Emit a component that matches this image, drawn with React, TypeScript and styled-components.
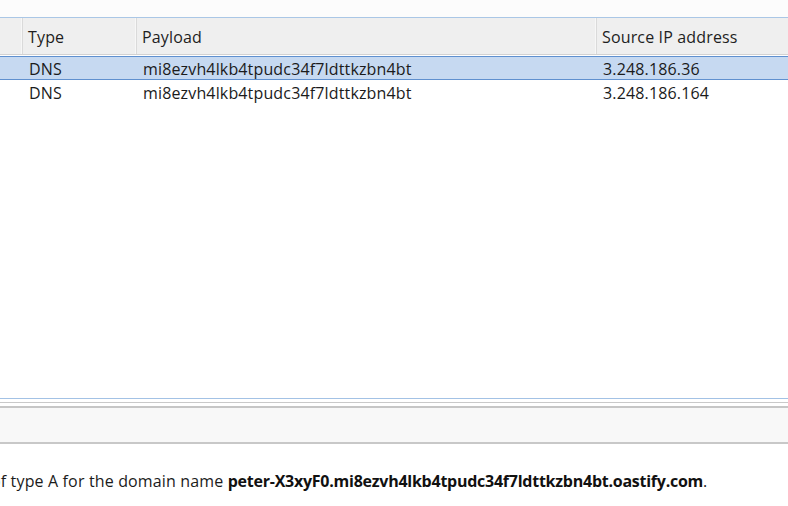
import React from "react";
import styled, { createGlobalStyle } from "styled-components";

const Global = createGlobalStyle`
  html, body { margin: 0; padding: 0; background: #ffffff; overflow: hidden; }
  body { font-family: "Open Sans", "Noto Sans", "DejaVu Sans", sans-serif; color: #1b1b1b; }
`;

const Page = styled.div`
  width: 788px;
  height: 506px;
  display: flex;
  flex-direction: column;
  overflow: hidden;
  background: #ffffff;
`;

const TopGap = styled.div`
  height: 17px;
  background: #fcfcfc;
  border-bottom: 1px solid #aac7e6;
`;

const cols = "23px 114px 460px 1fr";

const HeaderRow = styled.div`
  display: grid;
  grid-template-columns: ${cols};
  height: 36px;
  background: #efefef;
  border-bottom: 1px solid #d2d2d2;
`;

const HeaderCell = styled.div`
  display: flex;
  align-items: center;
  padding: 1px 0 0 5px;
  font-size: 16px;
  letter-spacing: 0.15px;
  line-height: 20px;
  color: #1e1e1e;
  border-right: 1px solid #dadada;
  box-shadow: inset -1px 0 0 #f7f7f7;
  white-space: nowrap;
  &:last-child { border-right: none; box-shadow: none; }
`;

const Body = styled.div`
  flex: 0 0 auto;
  height: 343px;
  padding-top: 1px;
  box-sizing: border-box;
  background: #ffffff;
`;

const Row = styled.div<{ $selected?: boolean }>`
  display: grid;
  grid-template-columns: ${cols};
  box-sizing: border-box;
  height: 24px;
  padding-top: 2px;
  align-items: center;
  background: ${(p) => (p.$selected ? "#c6d9f1" : "#ffffff")};
  border-top: ${(p) => (p.$selected ? "1px solid #5f90cf" : "none")};
  border-bottom: ${(p) => (p.$selected ? "1px solid #5f90cf" : "none")};
`;

const Cell = styled.div`
  padding-left: 6px;
  font-size: 16px;
  letter-spacing: 0.15px;
  line-height: 20px;
  color: #1b1b1b;
  white-space: nowrap;
  overflow: hidden;
`;

const Splitter = styled.div`
  height: 7px;
  background: #ffffff;
  border-top: 1px solid #a3c2e5;
  border-bottom: 2px solid #c6c6c6;
  box-shadow: inset 0 3px 0 #ffffff, inset 0 4px 0 #c9c9c9;
`;

const Toolbar = styled.div`
  height: 34px;
  background: #f8f8f8;
  border-bottom: 2px solid #c8c8c8;
`;

const Description = styled.p`
  margin: 26px 0 0 -9px;
  font-size: 16px;
  letter-spacing: 0.15px;
  line-height: 22px;
  color: #1b1b1b;
  white-space: nowrap;
`;

const Strong = styled.b`
  font-weight: 700;
  letter-spacing: -0.25px;
  color: #111;
`;

const rows = [
  { type: "DNS", payload: "mi8ezvh4lkb4tpudc34f7ldttkzbn4bt", ip: "3.248.186.36", selected: true },
  { type: "DNS", payload: "mi8ezvh4lkb4tpudc34f7ldttkzbn4bt", ip: "3.248.186.164", selected: false },
];

export default function App() {
  return (
    <Page>
      <Global />
      <TopGap />
      <HeaderRow>
        <HeaderCell />
        <HeaderCell>Type</HeaderCell>
        <HeaderCell>Payload</HeaderCell>
        <HeaderCell>Source IP address</HeaderCell>
      </HeaderRow>
      <Body>
        {rows.map((r, i) => (
          <Row key={i} $selected={r.selected}>
            <Cell />
            <Cell>{r.type}</Cell>
            <Cell>{r.payload}</Cell>
            <Cell>{r.ip}</Cell>
          </Row>
        ))}
      </Body>
      <Splitter />
      <Toolbar />
      <Description>
        of type A for the domain name <Strong>peter-X3xyF0.mi8ezvh4lkb4tpudc34f7ldttkzbn4bt.oastify.com</Strong>.
      </Description>
    </Page>
  );
}
